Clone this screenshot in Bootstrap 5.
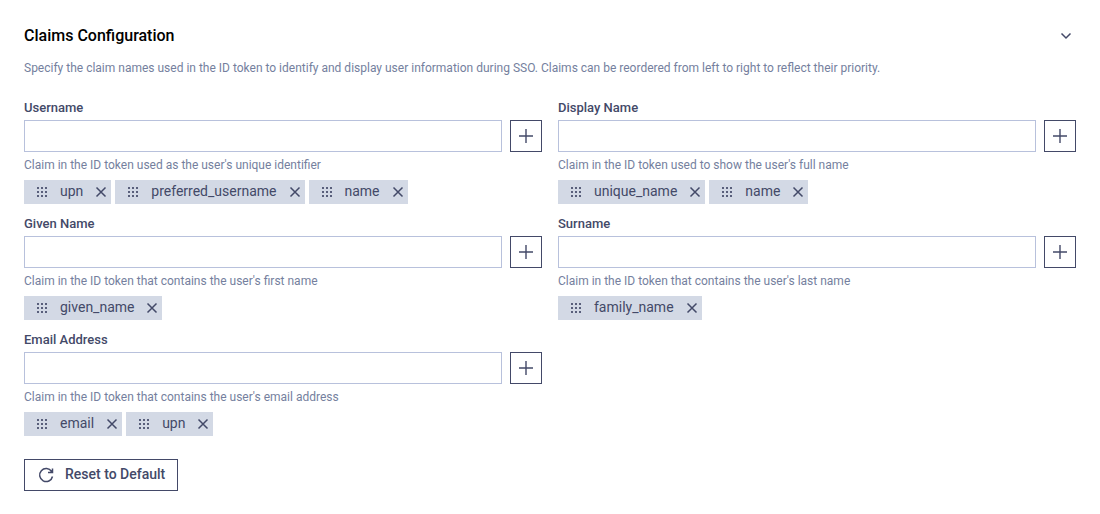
<!DOCTYPE html>
<html lang="en">
<head>
<meta charset="utf-8">
<meta name="viewport" content="width=device-width, initial-scale=1">
<title>Claims Configuration</title>
<link href="https://cdn.jsdelivr.net/npm/bootstrap@5.3.0/dist/css/bootstrap.min.css" rel="stylesheet">
<style>
  :root { --ink: #434968; --muted: #757f9e; --line: #b8c1dc; --chip: #d3d9e5; }
  body { font-family: Roboto, sans-serif; font-size: 14px; line-height: 20px; color: var(--ink); background: #fff; }
  .claims { padding: 24px; }
  .claims h2 { font-size: 16px; line-height: 24px; font-weight: 500; color: #000; }
  .intro { font-size: 12px; line-height: 16px; color: var(--muted); margin: 12px 0; }
  .toggle { width: 20px; height: 20px; border: 0; background: none; color: var(--ink); }
  .fields { --bs-gutter-x: 16px; --bs-gutter-y: 11px; }
  .fields label { font-size: 13px; line-height: 18px; font-weight: 500; margin-bottom: 3px; }
  .claim-input { height: 32px; border: 1px solid var(--line); border-radius: 0; padding: 4px 8px; font-size: 14px; }
  .square { width: 32px; height: 32px; border: 1px solid var(--ink); border-radius: 0; background: #fff; color: var(--ink); }
  .hint { font-size: 12px; line-height: 17px; color: var(--muted); margin: 5px 0 6px; }
  .chip { height: 24px; background: var(--chip); padding: 0 4px 0 12px; }
  .chip-text { margin: 0 12px; line-height: 20px; padding-bottom: 2px; }
  .chip-x { width: 12px; height: 12px; border: 0; background: none; color: var(--ink); }
  .reset { height: 32px; border: 1px solid var(--ink); border-radius: 0; background: #fff; color: var(--ink); font-size: 14px; line-height: 20px; font-weight: 500; padding: 0 12px; margin-top: 23px; gap: 10px; }
  .reset span { padding-bottom: 2px; }
  svg { display: block; flex: none; }
</style>
</head>
<body>
<svg width="0" height="0" class="position-absolute" aria-hidden="true">
  <symbol id="plus" viewBox="0 0 16 16"><path d="M8 1v14M1 8h14" fill="none" stroke="currentColor" stroke-width="1.400"/></symbol>
  <symbol id="cross" viewBox="0 0 12 12"><path d="M1.500 1.500l9 9M10.500 1.500l-9 9" fill="none" stroke="currentColor" stroke-width="1.500"/></symbol>
  <symbol id="grip" viewBox="0 0 12 12"><path d="M1 1h2v2h-2zM5 1h2v2h-2zM9 1h2v2h-2zM1 5h2v2h-2zM5 5h2v2h-2zM9 5h2v2h-2zM1 9h2v2h-2zM5 9h2v2h-2zM9 9h2v2h-2z" fill="currentColor" fill-opacity=".85"/></symbol>
</svg>
<main class="claims">
  <div class="d-flex align-items-center justify-content-between">
    <h2 class="m-0">Claims Configuration</h2>
    <button type="button" class="toggle p-0 d-flex align-items-center justify-content-center" aria-label="Collapse section" aria-expanded="true">
      <svg width="12" height="8" viewBox="0 0 12 8"><path d="M1.500 1.500L6 6l4.500-4.500" fill="none" stroke="currentColor" stroke-width="1.500"/></svg>
    </button>
  </div>
  <p class="intro">Specify the claim names used in the ID token to identify and display user information during SSO. Claims can be reordered from left to right to reflect their priority.</p>
  <form>
    <div class="row row-cols-2 fields mt-0" id="fields"></div>
    <button type="reset" class="reset d-inline-flex align-items-center">
      <svg width="18" height="18" viewBox="0 0 18 18"><path d="M14.600 5.500A6.500 6.500 0 1 0 15.500 10.500M15.500 2.500v4h-4.500" fill="none" stroke="currentColor" stroke-width="1.500"/></svg>
      <span>Reset to Default</span>
    </button>
  </form>
</main>
<script src="https://cdn.jsdelivr.net/npm/bootstrap@5.3.0/dist/js/bootstrap.bundle.min.js"></script>
<script>
  const fields = [
    ["username", "Username", "used as the user's unique identifier", ["upn", "preferred_username", "name"]],
    ["display", "Display Name", "used to show the user's full name", ["unique_name", "name"]],
    ["given", "Given Name", "that contains the user's first name", ["given_name"]],
    ["surname", "Surname", "that contains the user's last name", ["family_name"]],
    ["email", "Email Address", "that contains the user's email address", ["email", "upn"]]
  ];
  const icon = (name, size) => `<svg width="${size}" height="${size}" aria-hidden="true"><use href="#${name}"/></svg>`;
  const chip = text => `<li class="chip d-flex align-items-center">${icon("grip", 12)}<span class="chip-text">${text}</span><button type="button" class="chip-x p-0" aria-label="Remove ${text}">${icon("cross", 12)}</button></li>`;
  document.getElementById("fields").innerHTML = fields.map(([id, label, hint, claims]) => `
    <div class="col">
      <label class="d-block" for="${id}">${label}</label>
      <div class="d-flex gap-2">
        <input type="text" class="form-control claim-input" id="${id}" aria-describedby="${id}-hint">
        <button type="button" class="square p-0 flex-shrink-0 d-flex align-items-center justify-content-center" aria-label="Add ${label} claim">${icon("plus", 16)}</button>
      </div>
      <p class="hint" id="${id}-hint">Claim in the ID token ${hint}</p>
      <ul class="list-unstyled d-flex flex-wrap gap-1 m-0">${claims.map(chip).join("")}</ul>
    </div>`).join("");
</script>
</body>
</html>
